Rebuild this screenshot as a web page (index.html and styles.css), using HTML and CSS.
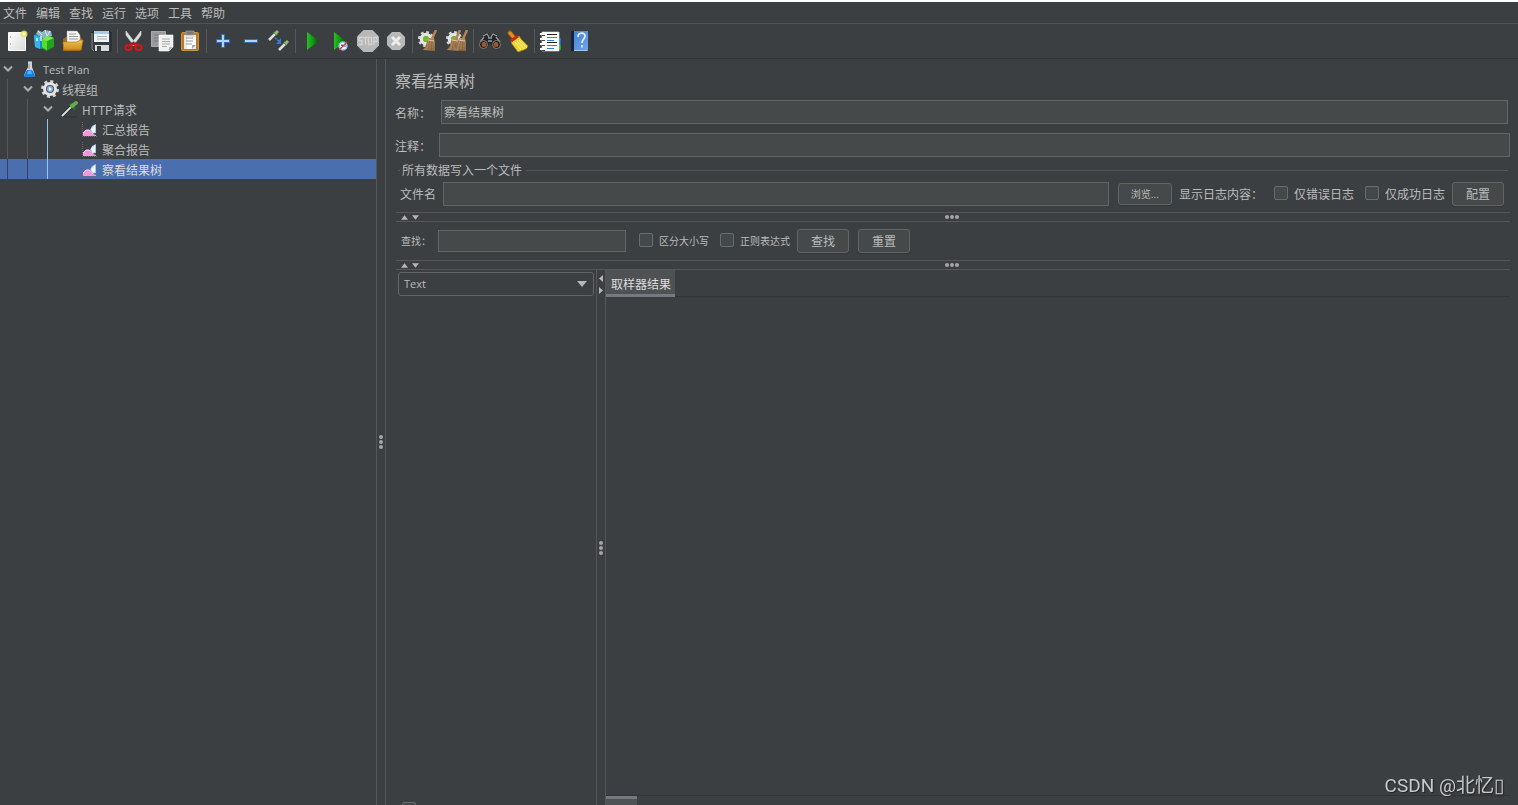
FILE: index.html
```html
<!DOCTYPE html>
<html lang="zh-CN">
<head>
<meta charset="utf-8">
<title>Test Plan</title>
<link rel="stylesheet" href="styles.css">
</head>
<body>
<svg class="defs" aria-hidden="true">
  <defs>
    <linearGradient id="gPage" x1="0" y1="0" x2="1" y2="1"><stop offset="0" stop-color="#fff"/><stop offset="1" stop-color="#d9d9d9"/></linearGradient>
    <linearGradient id="gGold" x1="0" y1="0" x2="0" y2="1"><stop offset="0" stop-color="#f0c24e"/><stop offset="1" stop-color="#c98c1c"/></linearGradient>
    <linearGradient id="gPlay" x1="0" y1="0" x2="1" y2="0"><stop offset="0" stop-color="#22c41e"/><stop offset=".5" stop-color="#12940f"/><stop offset="1" stop-color="#064f05"/></linearGradient>
    <linearGradient id="gBook" x1="0" y1="0" x2="1" y2="1"><stop offset="0" stop-color="#3f7fd0"/><stop offset="1" stop-color="#6fa6ea"/></linearGradient>
    <linearGradient id="gStraw" x1="0" y1="0" x2="1" y2="1"><stop offset="0" stop-color="#c8a274"/><stop offset="1" stop-color="#8a643c"/></linearGradient>
    <symbol id="chev" viewBox="0 0 20 20"><path d="M4 7.500l4 4 4-4" fill="none" stroke="#adadad" stroke-width="2"/></symbol>
    <symbol id="chart" viewBox="0 0 20 20">
      <path d="M2.500 3v14.500H17" fill="none" stroke="#73666f" stroke-dasharray="1 1"/>
      <path d="M3 17v-3l3-3h3l3 2 1 2 3 1v1z" fill="#f09adb"/><path d="M3 14l3-3h3l3 2 1 2" fill="none" stroke="#fbd3f0"/>
      <path d="M10 11l2-4 4-2v9l-3 .5z" fill="#a9c9f2"/><path d="M11 10l4-4v7l-2 1z" fill="#f1f7fd"/>
    </symbol>
    <symbol id="gear" viewBox="0 0 20 20">
      <circle cx="10" cy="10" r="7.500" fill="none" stroke="#d4d4d4" stroke-width="3" stroke-dasharray="3 2.890"/>
      <circle cx="10" cy="10" r="5" fill="none" stroke="#e4e4e4" stroke-width="4"/>
    </symbol>
    <symbol id="besom" viewBox="0 0 16 22">
      <path d="M14 0L10 9" stroke="#b38555" stroke-width="2.500"/>
      <path d="M6 8l6 0 1 4v9l-12-1 3-4z" fill="url(#gStraw)"/>
      <path d="M6 10l-3 9M8 10l-2 10M10 10l-1 11" stroke="#7d5835" stroke-width=".6"/>
      <path d="M5.500 10l6.500 1" stroke="#dfc6a3"/>
    </symbol>
    <symbol id="up" viewBox="0 0 8 5"><path d="M4 0l4 5H0z" fill="#b4b6b8"/></symbol>
  </defs>
</svg>

<nav class="menubar">
  <button>文件</button><button>编辑</button><button>查找</button><button>运行</button><button>选项</button><button>工具</button><button>帮助</button>
</nav>

<div class="toolbar">
  <button aria-label="新建"><svg viewBox="0 0 24 24"><path d="M3.500 3.500h17v18h-17z" fill="url(#gPage)" stroke="#fff"/><path d="M5.500 7v2M5.500 14v2" stroke="#bbb"/><circle cx="19" cy="5" r="3.500" fill="#f2e06a" opacity=".8"/><path d="M19 2v6M16 5h6" stroke="#f5e04c"/><circle cx="19" cy="5" r="1.500" fill="#fffbd0"/></svg></button>
  <button aria-label="模板"><svg viewBox="0 0 24 24"><path d="M1 6l7-2 7 2v12l-7 2-6-2z" fill="#1988c9"/><path d="M1 6l6 2v12l-5-2z" fill="#35b5ec"/><path d="M3 5l2-4 4 2 3-2 6 1 1 5-7 3z" fill="#8fb6c2"/><path d="M5 2l4 4M12 1l2 6M17 2l-4 7" stroke="#d4e9ef"/><path d="M8 7v5M4 9v3" stroke="#d8f0fa" stroke-width="1.500"/><path d="M9 10l6-3 6 2v9l-8 4-4-3z" fill="#1fa51d"/><path d="M9 10l5 1v10l-5-3z" fill="#55dc2c"/><path d="M9 10l6-3 6 2-7 3z" fill="#7bea48"/></svg></button>
  <button aria-label="打开"><svg viewBox="0 0 24 24"><path d="M2 10l3-2h15l1 3v9l-2 2H2z" fill="#9b6b16"/><path d="M6 2h10l3 4v9H6z" fill="#f5f5f5" stroke="#aaa" stroke-width=".5"/><path d="M8 5h7M8 7.500h9M8 10h9" stroke="#999"/><path d="M2 13h14l3-2h3l-2 10H3z" fill="url(#gGold)" stroke="#ac781b" stroke-width=".7"/></svg></button>
  <button aria-label="保存"><svg viewBox="0 0 24 24"><path d="M3 3h19v19H5l-2-2z" fill="#353b40" stroke="#20252a"/><path d="M3 4v16l2 2" fill="none" stroke="#8e959a"/><path d="M5 2h15v11H5z" fill="#eef4f8"/><path d="M5 2h15v3H5z" fill="#a9cce4"/><path d="M8 7.500h10M8 10h10" stroke="#a9b3ba"/><path d="M6 16h14v6H6z" fill="#d7d9da"/><path d="M8 17h4v5H8z" fill="#363c41"/></svg></button>
  <i class="sep"></i>
  <button aria-label="剪切"><svg viewBox="0 0 24 24"><path d="M4 2l10 13-2 2L4 6zM19 2L9 15l2 2 8-11z" fill="#e1e3e3" stroke="#c4c6c7" stroke-width=".8"/><path d="M11 14l-3 3M12 14l3 3" stroke="#c90d12" stroke-width="3"/><ellipse cx="6.500" cy="18.500" rx="3" ry="2.600" fill="none" stroke="#dc1318" stroke-width="2"/><ellipse cx="16.500" cy="18.500" rx="3" ry="2.600" fill="none" stroke="#dc1318" stroke-width="2"/></svg></button>
  <button aria-label="复制"><svg viewBox="0 0 24 24"><path d="M1.500 2.500h14v15h-14z" fill="#989b9c" stroke="#a7a9aa"/><path d="M4 6h9M4 9h9M4 12h5" stroke="#74787a"/><path d="M9 6h14v12l-4 4H9z" fill="#f1f1ef" stroke="#fff" stroke-width=".6"/><path d="M12 10h8M12 12.500h8M12 15h8M12 17.500h5" stroke="#a9a9a9"/><path d="M23 18l-4 4v-4z" fill="#b8b8b8"/></svg></button>
  <button aria-label="粘贴"><svg viewBox="0 0 24 24"><rect x="3.500" y="3.500" width="17" height="18" rx="1" fill="#b87a28" stroke="#d0913a"/><path d="M6 6h12v14H6z" fill="#e9e9e7"/><path d="M8 2h8v4H8z" fill="#77797a" stroke="#a5a5a5" stroke-width=".7"/><path d="M9 8h9v9l-3 3H9" fill="#fff"/><path d="M8 9h7M8 12h7M8 15h6" stroke="#999"/><path d="M18 16l-4 4v-4z" fill="#aaa"/></svg></button>
  <i class="sep"></i>
  <button aria-label="展开"><svg viewBox="0 0 24 24"><path d="M12 5v14M5 12h14" stroke="#2f6cb8" stroke-width="4"/><path d="M12 6v12M6 12h12" stroke="#b4d5f1" stroke-width="2"/></svg></button>
  <button aria-label="折叠"><svg viewBox="0 0 24 24"><path d="M5 12h14" stroke="#2f6cb8" stroke-width="4"/><path d="M6 12h12" stroke="#b4d5f1" stroke-width="2"/></svg></button>
  <button aria-label="切换"><svg viewBox="0 0 24 24"><g id="pip"><path d="M2 11l6-6" stroke="#dedfdc" stroke-width="2.500"/><path d="M7 3l3 3" stroke="#527943" stroke-width="2"/><path d="M8 5l3-3" stroke="#91bd72" stroke-width="3"/></g><use href="#pip" x="10" y="10"/><path d="M8 9l5 4" stroke="#3982da" stroke-width="1.500" stroke-dasharray="2 1"/><path d="M14 9v6H9z" fill="#327bd8"/></svg></button>
  <i class="sep"></i>
  <button aria-label="启动"><svg viewBox="0 0 24 24"><path d="M7 3l12 9-12 9z" fill="url(#gPlay)"/></svg></button>
  <button aria-label="不停顿开始"><svg viewBox="0 0 24 24"><path d="M6 3l12 9-12 9z" fill="url(#gPlay)"/><circle cx="15" cy="17" r="4" fill="#fff" stroke="#8fbdee" stroke-width="1.500"/><path d="M13 16h2v2M17 15v3" stroke="#3b6ab0"/><path d="M11 21l8-8" stroke="#de3a2e" stroke-width="1.500"/></svg></button>
  <button aria-label="停止" disabled><svg viewBox="0 0 24 24"><path d="M7.500 1h9L23 7.500v9L16.500 23h-9L1 16.500v-9z" fill="#b8b8b8"/><g fill="none" stroke="#d4d4d4" stroke-width="1.300"><path d="M6.500 8.500H3v3h3v4H2.500M7 8.500h5M9.500 8.500v7M12.500 8.500h3v7h-3zM18 16V8.500h3v4h-3"/></g></svg></button>
  <button aria-label="关闭" disabled><svg viewBox="0 0 24 24"><path d="M8 3h8l5 5v8l-5 5H8l-5-5V8z" fill="#b8b8b8"/><path d="M8 8l8 8M16 8l-8 8" stroke="#ededed" stroke-width="3"/></svg></button>
  <i class="sep"></i>
  <button aria-label="清除"><svg viewBox="0 0 24 24"><use href="#gear" x="0" y="1" width="18" height="18"/><circle cx="9" cy="10" r="3" fill="#72bd24"/><use href="#besom" x="5" y="1" width="16" height="22"/></svg></button>
  <button aria-label="清除全部"><svg viewBox="0 0 24 24"><use href="#gear" x="0" y="1" width="18" height="18"/><circle cx="9" cy="10" r="3" fill="#72bd24"/><use href="#besom" x="1" y="1" width="16" height="22"/><use href="#besom" x="8" y="1" width="16" height="22"/></svg></button>
  <i class="sep"></i>
  <button aria-label="搜索"><svg viewBox="0 0 24 24"><path d="M6 5l4-1 2 3 2-3 4 1 5 9-3 5h-5l-3-5-3 5H4l-3-5z" fill="#222626"/><path d="M5 7l4-2 2 3M19 7l-4-2-2 3M2 13l4-5M22 13l-4-5M10 9h4M10 12h4" fill="none" stroke="#9a9d9f" stroke-width="1.300"/><circle cx="5.500" cy="15.500" r="4" fill="#151818" stroke="#7f8485"/><circle cx="18.500" cy="15.500" r="4" fill="#151818" stroke="#7f8485"/><circle cx="6" cy="15.500" r="2.500" fill="#a45826"/><circle cx="18" cy="15.500" r="2.500" fill="#a45826"/></svg></button>
  <button aria-label="重置搜索"><svg viewBox="0 0 24 24"><path d="M4 4l5 6" stroke="#995812" stroke-width="5" stroke-linecap="round"/><path d="M4 4l5 6" stroke="#dc922b" stroke-width="3" stroke-linecap="round"/><path d="M5 12l8-5 2 3 7 7-2 3-8 3-6-8z" fill="#edd637" stroke="#a88813" stroke-width=".7"/><path d="M9 13l6 8M11 12l7 8M13 11l8 8" stroke="#fbf17c"/><path d="M5 12l7-5" stroke="#cb261d" stroke-width="3"/></svg></button>
  <i class="sep"></i>
  <button aria-label="函数助手"><svg viewBox="0 0 24 24"><path d="M19 9h3v7h-3z" fill="#1771d4"/><path d="M19 16h3v5h-3z" fill="#24a31d"/><path d="M3 3h17v19H3z" fill="#fff" stroke="#dedede" stroke-width=".6"/><path d="M8 5.500h10M8 13.500h10" stroke="#222"/><path d="M8 8.500h10M8 16.500h10" stroke="#2d7ee0"/><path d="M8 11.500h7M8 19.500h7" stroke="#2d7ee0"/><path d="M1 5h5M1 10h5M1 15h5M1 20h5" stroke="#fff" stroke-width="2"/><path d="M3 6.500h3M3 11.500h3M3 16.500h3M3 21.500h3" stroke="#444"/></svg></button>
  <button aria-label="帮助"><svg viewBox="0 0 24 24"><path d="M4 2h17v20H4z" fill="url(#gBook)"/><path d="M4 2h3v20H4z" fill="#16233c"/><path d="M7 21.500h13" stroke="#a6c5ea"/><path d="M11 8c0-5 7-5 7-1 0 3-3 3-3 7M15 16v2.500" fill="none" stroke="#e5f0ff" stroke-width="1.700"/></svg></button>
</div>

<main class="workspace">
  <ul class="tree">
    <li><svg class="cell"><use href="#chev"/></svg><svg class="cell" viewBox="0 0 20 20"><path d="M8 3h4v5l3 8-1 2H5l-1-2 4-8z" fill="#c9d6e2"/><path d="M7 11h5l3 5-1 2H5l-1-2z" fill="#1c7fe0"/><path d="M8 12l3-1 1 4H7z" fill="#55b2fb"/><path d="M8 2.500h4M9 5v5" stroke="#8a9299"/></svg><span class="latin">Test Plan</span></li>
    <li><i class="guide"></i><svg class="cell"><use href="#chev"/></svg><svg class="cell" viewBox="0 0 20 20"><use href="#gear" width="20" height="20"/><circle cx="10" cy="10" r="4" fill="#3c5578"/><circle cx="10" cy="10" r="3" fill="#8db3dd"/><path d="M9 8l3 2-3 2z" fill="#f4f9ff"/></svg><span>线程组</span></li>
    <li><i class="guide"></i><i class="guide"></i><svg class="cell"><use href="#chev"/></svg><svg class="cell" viewBox="0 0 20 20"><path d="M4 18h13" stroke="#24282a" opacity=".6"/><path d="M2 17l9-9" stroke="#222728" stroke-width="3.500"/><path d="M2 17l9-9" stroke="#d8dddc" stroke-width="2"/><path d="M10 5l5 5" stroke="#316f2b" stroke-width="2.500"/><path d="M12 7l4-3" stroke="#62ac4e" stroke-width="4" stroke-linecap="round"/></svg><span>HTTP请求</span></li>
    <li><i class="guide"></i><i class="guide"></i><i class="guide current"></i><i class="cell"></i><svg class="cell"><use href="#chart"/></svg><span>汇总报告</span></li>
    <li><i class="guide"></i><i class="guide"></i><i class="guide current"></i><i class="cell"></i><svg class="cell"><use href="#chart"/></svg><span>聚合报告</span></li>
    <li class="selected"><i class="guide"></i><i class="guide"></i><i class="guide current"></i><i class="cell"></i><svg class="cell"><use href="#chart"/></svg><span>察看结果树</span></li>
  </ul>
  <div class="split-v"><i class="dots"></i></div>

  <section class="panel">
    <h1>察看结果树</h1>
    <div class="field name"><label for="name">名称：</label><input id="name" value="察看结果树"></div>
    <div class="field"><label for="comment">注释：</label><input id="comment"></div>
    <div class="group-title"><span>所有数据写入一个文件</span></div>
    <div class="file-row">
      <label for="file">文件名</label><input id="file">
      <button class="btn small">浏览...</button>
      <span class="log">显示日志内容：</span>
      <label class="check"><input type="checkbox">仅错误日志</label>
      <label class="check"><input type="checkbox">仅成功日志</label>
      <button class="btn">配置</button>
    </div>
    <div class="split-h"><svg><use href="#up"/></svg><svg class="down"><use href="#up"/></svg><i class="dots"></i></div>
    <div class="search-row">
      <label for="find">查找：</label><input id="find">
      <label class="check"><input type="checkbox">区分大小写</label>
      <label class="check"><input type="checkbox">正则表达式</label>
      <button class="btn">查找</button>
      <button class="btn">重置</button>
    </div>
    <div class="split-h"><svg><use href="#up"/></svg><svg class="down"><use href="#up"/></svg><i class="dots"></i></div>
    <div class="results">
      <div class="samples">
        <div class="combo"><select aria-label="Renderer"><option>Text</option></select><svg viewBox="0 0 10 6"><path d="M0 0h10L5 6z" fill="#b4b6b8"/></svg></div>
        <input class="peek" type="checkbox" aria-label="Scroll">
      </div>
      <div class="split-v"><span class="arrows"><svg viewBox="0 0 4 7"><path d="M4 0v7L0 3.500z" fill="#b4b6b8"/></svg><svg viewBox="0 0 4 7"><path d="M0 0v7l4-3.500z" fill="#b4b6b8"/></svg></span><i class="dots"></i></div>
      <div class="detail">
        <div class="tabs"><button class="on">取样器结果</button></div>
        <div class="tabs bottom"><button class="on">Raw</button><button>Parsed</button></div>
      </div>
    </div>
  </section>
</main>
<div class="watermark">CSDN @北忆▯</div>
</body>
</html>
```
FILE: styles.css
```css
* { box-sizing: border-box; }
body {
  margin: 0;
  height: 100vh;
  overflow: hidden;
  display: flex;
  flex-direction: column;
  border-top: 2px solid #fff;
  background: #3c3f41;
  color: #bbb;
  font: 12px/20px "Noto Sans CJK SC", sans-serif;
  white-space: nowrap;
}
button, input, select { font: inherit; color: inherit; margin: 0; }
i { flex: none; }
.defs { position: absolute; width: 0; height: 0; }

.menubar { display: flex; gap: 9px; height: 22px; padding-left: 3px; border-bottom: 1px solid #515456; }
.menubar button { padding: 0; border: 0; background: none; }

.toolbar { display: flex; align-items: center; gap: 4px; height: 35px; padding-left: 5px; border-bottom: 1px solid #323536; }
.toolbar button { width: 24px; height: 24px; padding: 0; border: 0; background: none; }
.toolbar svg { display: block; width: 24px; height: 24px; }
.sep { width: 1px; height: 24px; background: #555859; }

.workspace { flex: 1; min-height: 0; display: flex; }
.tree { width: 376px; flex: none; margin: 0; padding: 0; list-style: none; line-height: 22px; }
.tree li { display: flex; height: 20px; }
.tree span { padding-left: 2px; }
.tree .latin { padding-left: 3px; }
.latin, .combo { font-family: "Open Sans", sans-serif; font-size: 11px; }
.cell, .guide { width: 20px; height: 20px; flex: none; }
.guide::before { content: ""; display: block; width: 1px; height: 20px; margin-left: 7px; background: #555859; }
.selected { background: #4b6eaf; color: #ddd; }
.selected .guide::before { background: #35415c; }
.guide.current::before { background: #8cc8f4; }

.split-v { width: 10px; flex: none; display: flex; flex-direction: column; align-items: center; justify-content: center; border: solid #565656; border-width: 0 1px; position: relative; }
.split-h { height: 10px; flex: none; display: flex; align-items: center; gap: 4px; margin: 0 8px 0 10px; padding-left: 5px; border: solid #565656; border-width: 1px 0; position: relative; }
.split-h svg { width: 7px; height: 5px; }
.split-h .down { transform: rotate(180deg); }
.dots { width: 4px; height: 4px; border-radius: 50%; background: #a4a6a7; box-shadow: 0 -5px #a4a6a7, 0 5px #a4a6a7; }
.split-v .dots { margin-top: 20px; }
.split-h .dots { position: absolute; left: 50%; margin-left: -3px; box-shadow: -5px 0 #a4a6a7, 5px 0 #a4a6a7; }
.arrows { position: absolute; top: 5px; left: 2px; display: grid; gap: 5px; }
.arrows svg { width: 4px; height: 7px; }

.panel { flex: 1; min-width: 0; display: flex; flex-direction: column; }
h1 { margin: 9px 0 8px 9px; font-size: 16px; line-height: 24px; font-weight: 400; }
.panel input:not([type="checkbox"]) { min-width: 0; height: 24px; padding: 0 2px; border: 1px solid #646464; background: #45494a; }
.field { display: flex; align-items: center; margin: 0 8px 9px 9px; line-height: 24px; }
.field label { width: 44px; padding-top: 1px; height: 24px; }
.field input { flex: 1; }
.name { margin-right: 10px; }
.name label { width: 46px; }

.group-title { display: flex; align-items: center; gap: 4px; height: 8px; margin: 0 10px 0 12px; }
.group-title::before, .group-title::after { content: ""; height: 1px; background: #565656; }
.group-title::before { width: 2px; margin-right: -2px; }
.group-title::after { flex: 1; }

.file-row { display: flex; align-items: center; height: 24px; margin: 8px 14px 6px 14px; line-height: 22px; }
.file-row > input { flex: 1; margin: 0 9px 0 7px; }
.btn { width: 52px; height: 24px; padding: 0; border: 1px solid #646464; border-radius: 3px; background: #45494a; box-shadow: 0 1px #35383a; }
.btn.small { width: 54px; height: 22px; font-size: 10px; line-height: 16px; }
.log { width: 90px; margin-left: 7px; }
.check { display: flex; align-items: center; gap: 6px; }
.file-row .check { margin-right: 7px; }
.file-row .log { margin-right: 5px; }
.file-row .check + .check { margin-left: 4px; }
input[type="checkbox"] { appearance: none; flex: none; width: 14px; height: 14px; border: 1px solid #6b6b6b; border-radius: 2px; background: #43494a; }
.file-row input[type="checkbox"], .search-row input[type="checkbox"] { margin-bottom: 3px; }

.search-row { display: flex; align-items: center; height: 38px; padding-left: 15px; font-size: 10px; }
.search-row > label:first-child { width: 37px; }
.search-row > input:not([type="checkbox"]) { width: 188px; height: 22px; margin-right: 13px; }
.search-row .check + .check { margin-left: 11px; }
.search-row .btn { margin-left: 7px; font-size: 12px; }
.search-row .btn + .btn { margin-left: 9px; }

.results { flex: 1; min-height: 0; display: flex; }
.samples { width: 210px; flex: none; display: flex; flex-direction: column; justify-content: space-between; padding: 2px 2px 0 12px; }
.combo { position: relative; }
.combo select { appearance: none; display: block; width: 100%; height: 24px; padding: 0 5px; border: 1px solid #646464; border-radius: 3px; background: #3c3f41; }
.combo svg { position: absolute; right: 7px; top: 9px; width: 10px; height: 6px; pointer-events: none; }
.peek { margin: 0 0 -11px 4px; }
.detail { flex: 1; min-width: 0; display: flex; flex-direction: column; justify-content: space-between; margin-right: 8px; }
.tabs { display: flex; height: 27px; border-bottom: 1px solid #323536; }
.tabs button { padding: 3px 4px 0 5px; border: 0; background: none; }
.tabs .on { height: 27px; background: #4e5254; color: #ddd; border-bottom: 3px solid #747a80; }
.tabs.bottom { margin-bottom: -17px; border: 0; border-top: 1px solid #323536; font: 11px/16px "Open Sans", sans-serif; }
.tabs.bottom button { height: 26px; padding: 0 5px; border: 0; border-top: 3px solid transparent; }
.tabs.bottom .on { border-color: #747a80; }

.watermark { position: fixed; right: 14px; bottom: 5px; font: 19px/28px Roboto, "Noto Sans CJK SC", sans-serif; color: #c8c9ca; text-shadow: 1px 1px 1px #222; }
```
